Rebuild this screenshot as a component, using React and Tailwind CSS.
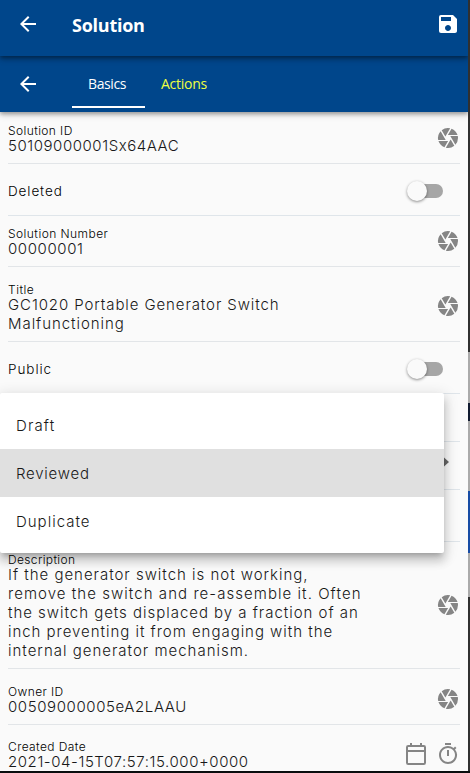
import React from "react";
import { MdArrowBack, MdSave, MdCamera, MdOutlineTimer } from "react-icons/md";

function Label({ children, className }) {
  return <div className={`h-[11px] whitespace-nowrap text-[12px] leading-[11px] font-light text-black ${className}`}>{children}</div>;
}

function Line({ children, className }) {
  return <div className={`whitespace-nowrap text-[15px] leading-[19px] font-light ${className}`}>{children}</div>;
}

function Field({ height, label, labelClass, lines, iconClass, children }) {
  return (
    <div className={`mx-2 flex shrink-0 justify-between border-b border-[#e2e5e8] ${height}`}>
      <div className="flex flex-col justify-end pb-2">
        <Label className={labelClass}>{label}</Label>
        {lines.map(([text, cls]) => (
          <Line key={text} className={cls}>{text}</Line>
        ))}
      </div>
      <div className={`flex items-center gap-2 text-[#858585] ${iconClass}`}>{children || <MdCamera size={24} />}</div>
    </div>
  );
}

function Toggle({ label, className }) {
  return (
    <div className="mx-2 flex h-[52px] shrink-0 items-center justify-between border-b border-[#dfe5ea] pt-[3px] pr-[17px]">
      <span className={`text-[13.5px] leading-5 font-light text-black ${className}`}>{label}</span>
      <div className="flex h-[14px] w-[34px] items-center rounded-full bg-[#a6a6a6]">
        <div className="-ml-0.5 h-5 w-5 shrink-0 rounded-full bg-[#fafafa] shadow-[0_1px_3px_rgba(0,0,0,0.45)]" />
      </div>
    </div>
  );
}

function CalendarIcon() {
  return (
    <svg width="24" height="24" viewBox="0 0 24 24" fill="none" stroke="currentColor" strokeWidth="2">
      <rect x="3" y="4" width="18" height="18" rx="1.2" />
      <path d="M3 9H21M7 1V4M17 1V4" />
    </svg>
  );
}

export default function App() {
  return (
    <div className="relative flex h-[773px] w-[470px] overflow-hidden border-b-2 border-[#090d0e] bg-[#303030] font-['Inter',sans-serif] text-[#181818]">
      <main className="flex w-[468px] shrink-0 flex-col overflow-hidden bg-[#fafafa]">
        <header className="relative z-20 flex h-14 shrink-0 items-center bg-[#00468b] pr-2 pl-4 text-white shadow-[0_2px_4px_rgba(0,0,0,0.35),0_3px_7px_rgba(0,0,0,0.2)]">
          <MdArrowBack size={24} className="-mt-2" />
          <h1 className="ml-8 flex-1 pb-[6px] font-['Open_Sans',sans-serif] text-[18px] leading-6 font-bold tracking-[-0.25px]">Solution</h1>
          <MdSave size={24} className="-mt-2" />
        </header>
        <nav className="relative z-10 flex h-14 shrink-0 items-center bg-[#00468b] pl-4 font-['Open_Sans',sans-serif] text-[14px] text-white shadow-[0_2px_4px_rgba(0,0,0,0.3),0_3px_7px_rgba(0,0,0,0.15)]">
          <MdArrowBack size={24} />
          <div className="ml-8 flex h-12 w-[73px] items-center justify-center self-center border-b-2 border-white pr-[3px]"><span className="tracking-[-0.4px]">Basics</span></div>
          <div className="pb-0.5 pl-4 tracking-[-0.25px] text-[#eeff41]">Actions</div>
        </nav>
        <Field height="h-[52px]" label="Solution ID" labelClass="tracking-[0.4px]" lines={[["50109000001Sx64AAC", "tracking-[0.55px]"]]} />
        <Toggle label="Deleted" className="tracking-[0.9px]" />
        <Field height="h-[51px]" label="Solution Number" labelClass="tracking-[0.45px]" lines={[["00000001", "tracking-[0.6px]"]]} />
        <Field height="h-[75px]" label="Title" labelClass="tracking-[0.5px]" lines={[["GC1020 Portable Generator Switch", "tracking-[0.9px]"], ["Malfunctioning", "tracking-[0.95px]"]]} iconClass="pt-1" />
        <Toggle label="Public" className="tracking-[0.95px]" />
        <div className="mx-2 h-12 shrink-0 border-b border-[#dfe5ea]" />
        <div className="mx-2 flex h-12 shrink-0 items-center justify-end border-b border-[#dfe5ea] pr-[11px] pb-[7px] text-[#666]">
          <svg width="8" height="10" viewBox="0 0 8 10" fill="currentColor"><path d="M0 3H3V0.5L8 5L3 9.5V7H0Z" /></svg>
        </div>
        <div className="mx-2 h-[52px] shrink-0 border-b border-[#dfe5ea]" />
        <Field height="h-[127px]" label="Description" labelClass="tracking-[0.35px]" lines={[
          ["If the generator switch is not working,", "tracking-[0.98px]"],
          ["remove the switch and re-assemble it. Often", "tracking-[1.05px]"],
          ["the switch gets displaced by a fraction of an", "tracking-[0.97px]"],
          ["inch preventing it from engaging with the", "tracking-[0.97px]"],
          ["internal generator mechanism.", "tracking-[1px]"],
        ]} />
        <Field height="h-[56px]" label="Owner ID" labelClass="tracking-[0.4px]" lines={[["00509000005eA2LAAU", "tracking-[0.6px]"]]} iconClass="pt-[5px]" />
        <Field height="h-[55px]" label="Created Date" labelClass="tracking-[0.4px]" lines={[["2021-04-15T07:57:15.000+0000", "tracking-[0.57px]"]]} iconClass="pt-[3px]">
          <CalendarIcon />
          <MdOutlineTimer size={24} />
        </Field>
      </main>
      <aside className="flex w-0.5 flex-col">
        <div className="h-[352px] bg-[#303030]" />
        <div className="h-[51px] bg-[#aaa]" />
        <div className="h-[18px] bg-[#111b30]" />
        <div className="h-[70px] bg-[#aaa]" />
        <div className="h-[62px] bg-[#174ca5]" />
        <div className="h-[44px] bg-[#aaa]" />
        <div className="flex-1 bg-[#303030]" />
      </aside>
      <div className="absolute top-[393px] left-0 z-30 w-[444px] rounded-[2px] bg-white py-2 text-[15px] font-light shadow-[0_5px_5px_-3px_rgba(0,0,0,0.2),0_8px_10px_1px_rgba(0,0,0,0.14),0_3px_14px_2px_rgba(0,0,0,0.12)]">
        <div className="flex h-12 items-center pt-0.5 pl-4"><span className="tracking-[1.1px]">Draft</span></div>
        <div className="flex h-12 items-center bg-[#e0e0e0] pt-0.5 pl-4"><span className="tracking-[0.75px]">Reviewed</span></div>
        <div className="flex h-12 items-center pt-0.5 pl-4"><span className="tracking-[1px]">Duplicate</span></div>
      </div>
    </div>
  );
}
